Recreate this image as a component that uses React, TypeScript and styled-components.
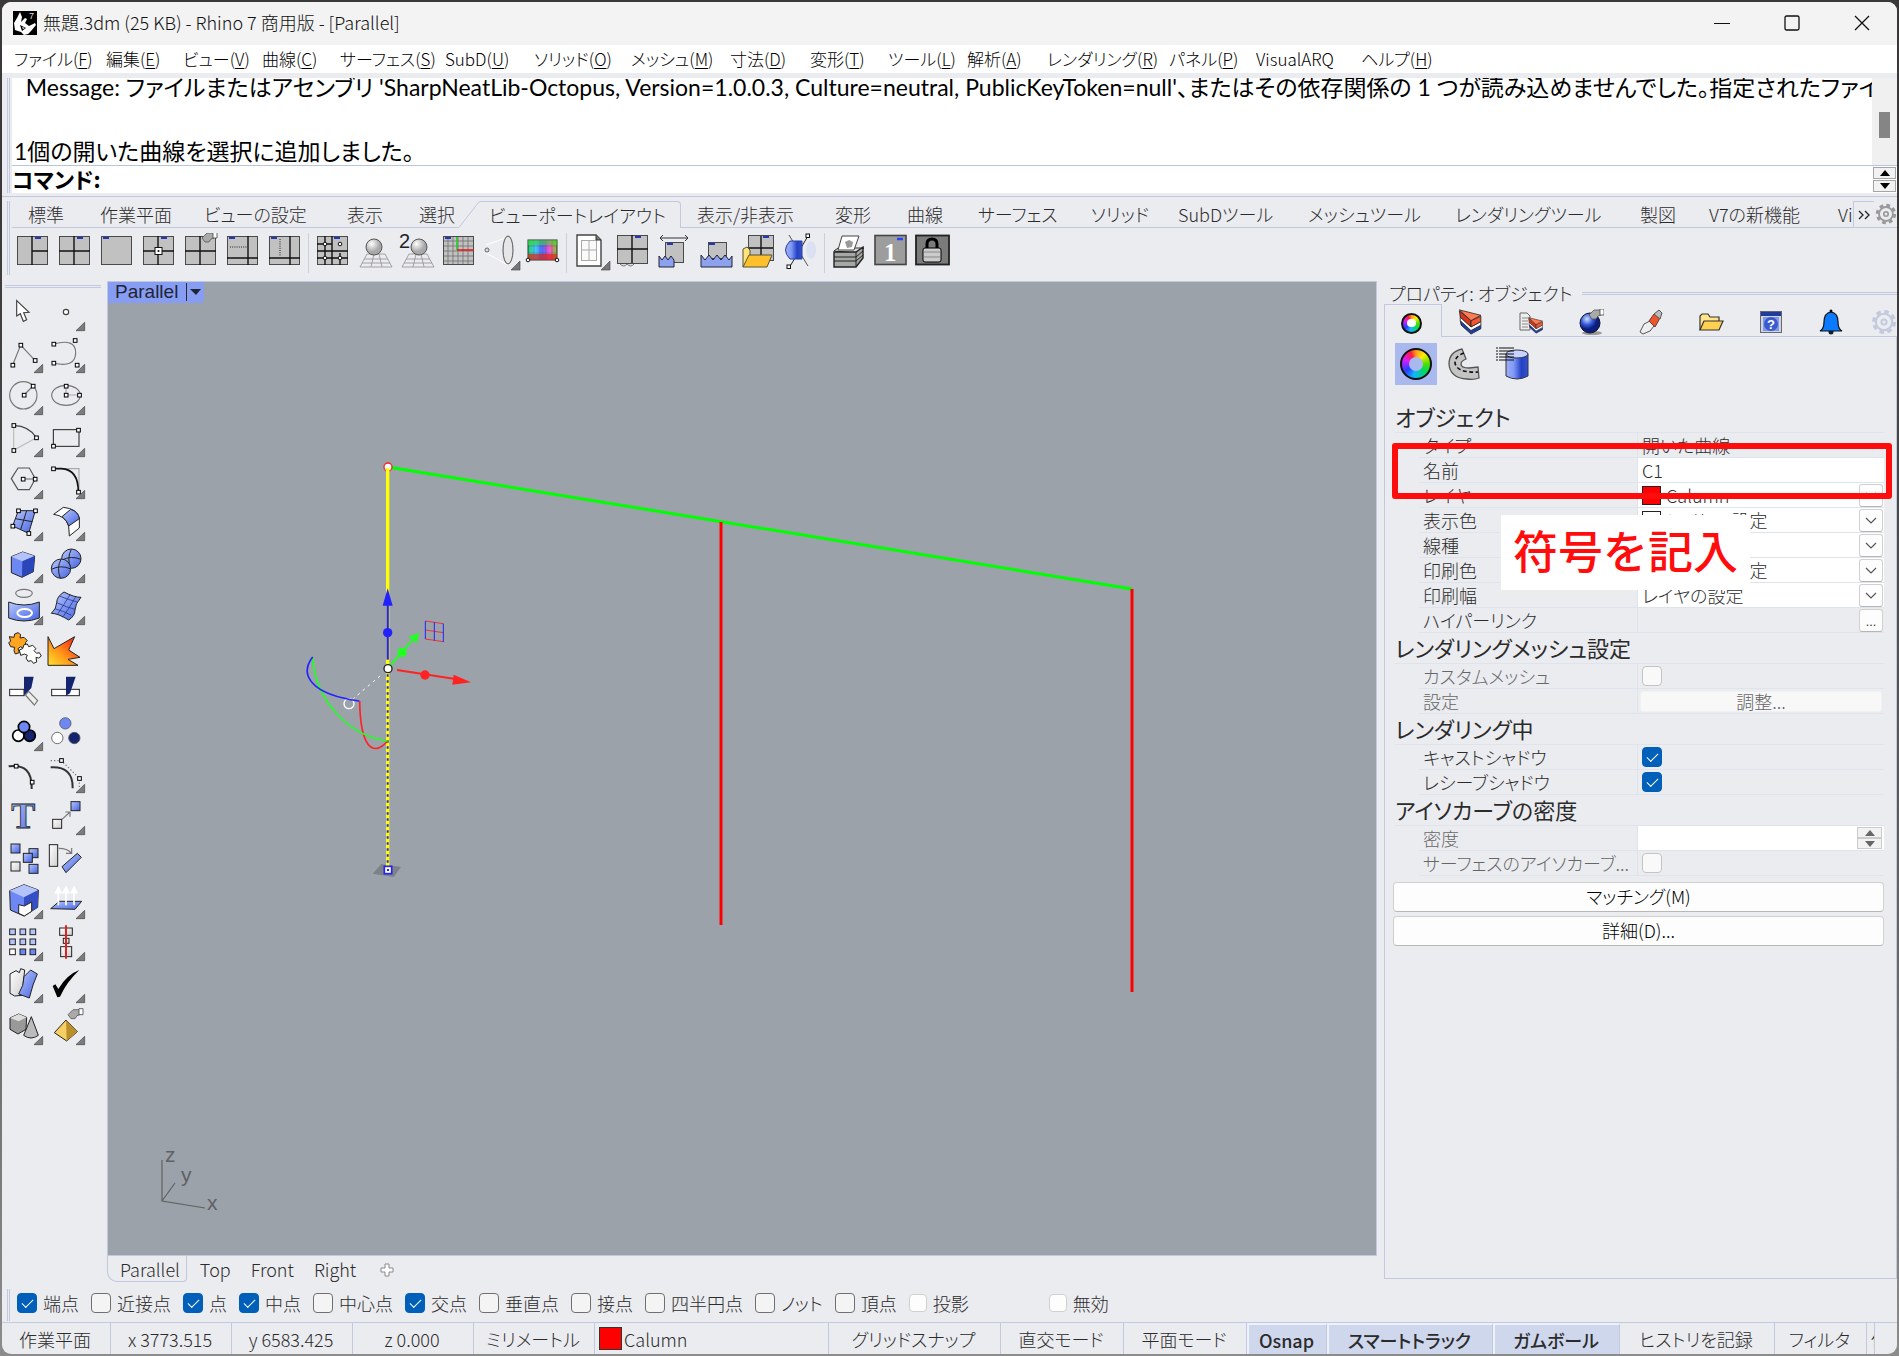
import React, { useState } from "react";
import styled, { createGlobalStyle, css } from "styled-components";

const c = {
  face: "#ebecf0",
  line: "#c2c9df",
  softLine: "#dfe3ec",
  text: "#2b2b2b",
  red: "#ff0d0d",
  accent: "#005fb8",
  blue: "#6d88f2",
  pale: "#b4c4fb",
  navy: "#14246e",
};
const ui = `"Noto Sans CJK JP", "Noto Sans", sans-serif`;

const Global = createGlobalStyle`
  * { box-sizing: border-box; }
  body { margin: 0; background: linear-gradient(#3a3838 0 15%, #5a5a5a 60%, #8c8c8c); font: 300 18px/20px ${ui}; color: ${c.text}; font-feature-settings: "palt"; }
  button, input, select { font: inherit; font-feature-settings: inherit; color: inherit; margin: 0; }
`;

const Page = styled.div`height: 100vh; min-height: 1000px; padding: 2px;`;
const Window = styled.main`
  height: 100%; display: flex; flex-direction: column; background: ${c.face};
  border-radius: 9px; overflow: hidden;
`;

/* ---------- title and menu ---------- */
const TitleBar = styled.header`
  height: 43px; flex: none; background: #f3f3f3; display: flex; align-items: center; padding: 0 0 2px 11px; color: #111;
`;
const Title = styled.h1`font: inherit; line-height: 22px; margin: 0 0 2px 6px; flex: 1; white-space: nowrap;`;
const CaptionButton = styled.button`
  width: 70px; height: 41px; border: 0; background: none; display: grid; place-items: center; padding: 0;
`;
const MenuBar = styled.nav`
  height: 28px; flex: none; background: #fff; display: flex; align-items: center; padding-left: 12px; color: #000;
`;
const MenuButton = styled.button<{ $w: number }>`
  width: ${p => p.$w}px; border: 0; background: none; padding: 0; text-align: left; white-space: nowrap; font-size: 17px;
  u { text-underline-offset: 2px; text-decoration-thickness: 1px; }
`;

/* ---------- command area ---------- */
const Command = styled.section`display: flex; padding: 5px 0 3px 5px; flex: none; height: 123px;`;
const GripV = styled.div`width: 3px; border: solid ${c.line}; border-width: 0 1px; margin-right: 2px; flex: none;`;
const CommandBox = styled.div`flex: 1; min-width: 0; display: flex; flex-direction: column; background: #fff; color: #000;`;
const HistoryRow = styled.div`flex: 1; display: flex; min-height: 0; border-bottom: 1px solid #b9c5d9;`;
const History = styled.div`
  flex: 1; min-width: 0; overflow: hidden; display: flex; flex-direction: column; justify-content: flex-end;
  font-family: Lato, ${ui}; font-weight: 400; font-size: 23px; line-height: 36px; white-space: pre; padding-left: 2px;
  p { margin: 0; height: 32px; flex: none; }
`;
const ScrollTrack = styled.div`width: 25px; background: #f0f0f0; padding: 34px 7px 0;`;
const ScrollThumb = styled.div`width: 11px; height: 26px; background: #858585;`;
const Prompt = styled.div`
  height: 27px; display: flex; align-items: flex-start; font-size: 22px; line-height: 24px; font-weight: 700;
  label { white-space: nowrap; }
  input { flex: 1; border: 0; outline: 0; background: none; padding: 0 6px; height: 26px; font-weight: 400; }
`;
const Stepper = styled.div`
  width: 25px; padding: 1px; display: flex; flex-direction: column; gap: 1px; height: 27px; background: #fff;
  button { flex: 1; min-height: 0; padding: 0; border: 1px solid #a5a5a5; background: #f2f2f2; display: grid; place-items: center; }
`;

/* ---------- toolbar tabs ---------- */
const ToolGroup = styled.section`
  flex: none; height: 81px; border-top: 1px solid ${c.line}; padding: 4px 0 2px 5px; display: flex;
`;
const ToolBody = styled.div`flex: 1; min-width: 0;`;
const Tabs = styled.div`display: flex; height: 27px;`;
const Tab = styled.button<{ $w: number; $on?: boolean; $fill?: boolean }>`
  width: ${p => p.$w}px; flex: ${p => (p.$fill ? "1 1 0" : "none")}; height: 27px; padding: 0 0 0 16px; background: none; border: 0;
  border-bottom: 1px solid ${c.line}; text-align: left; white-space: nowrap; overflow: hidden;
  ${p => p.$on && css`padding-left: 8px; border: 1px solid ${c.line}; border-width: 1px 1px 0 0; border-radius: 0 4px 0 0;`}
`;
const Slant = styled.svg`width: 22px; height: 27px; flex: none;`;
const More = styled.button`
  width: 21px; height: 27px; padding: 0; background: none; border: 1px solid ${c.line}; border-right: 0; display: grid; place-items: center; flex: none;
`;
const Gear = styled.button`
  width: 23px; height: 27px; padding: 0; background: none; border: 0; border-bottom: 1px solid ${c.line}; flex: none; display: grid; place-items: center;
`;
const IconRow = styled.div`display: flex; padding: 5px 0 0 2px;`;
const ToolButton = styled.button`
  width: 42px; height: 40px; padding: 0; border: 0; background: none; flex: none;
  svg { display: block; width: 40px; height: 40px; }
`;
const Separator = styled.div`width: 6px; height: 40px; border-left: 1px solid #cdd0da;`;

/* ---------- workspace ---------- */
const Workspace = styled.div`flex: 1; min-height: 0; display: flex; padding-top: 4px;`;
const SideBar = styled.aside`width: 105px; flex: none; padding: 4px 6px 0 3px;`;
const GripH = styled.div`height: 3px; border: solid ${c.line}; border-width: 1px 0;`;
const SideGrid = styled.div`
  display: grid; grid-template-columns: 42px 42px; grid-auto-rows: 42px; padding: 6px 0 0 1px;
  button { border: 0; background: none; padding: 0; width: 38px; height: 38px; }
  svg { display: block; width: 38px; height: 38px; overflow: visible; }
`;
const ViewColumn = styled.section`flex: 1; min-width: 0; display: flex; flex-direction: column; padding-bottom: 5px;`;
const Viewport = styled.div`
  flex: 1; min-height: 0; background: #9ba2aa; border: 1px solid ${c.line}; position: relative; overflow: hidden;
`;
const Scene = styled.svg`position: absolute; inset: 0; width: 100%; height: 100%;`;
const ViewLabel = styled.button`
  position: relative; display: flex; align-items: center; height: 21px; padding: 0 0 2px 7px; border: 0;
  background: #879df2; color: #1f2536; font-family: "Liberation Sans", sans-serif; font-weight: 400; font-size: 19px; gap: 8px; border-radius: 0 0 4px 0;
  svg { border-left: 1px solid #2b2b2b; margin-top: 1px; }
`;
const ViewTabs = styled.div`display: flex; height: 26px; align-items: flex-start;`;
const ViewTab = styled.button<{ $on?: boolean }>`
  height: 26px; padding: 0 10px; border: 0; background: none;
  &:last-child { padding-left: 14px; }
  ${p => p.$on && css`
    padding: 0 6px 0 12px; border: 1px solid ${c.line}; border-top: 0; border-radius: 0 0 4px 10px; margin-right: 3px;
  `}
`;

/* ---------- properties panel ---------- */
const Panel = styled.aside`width: 513px; flex: none; margin: 1px 0 0 7px; display: flex; flex-direction: column; padding-bottom: 8px; position: relative;`;
const PanelTitle = styled.div`
  display: flex; align-items: center; height: 22px; padding-left: 5px; gap: 10px; white-space: nowrap;
  div { flex: 1; }
`;
const PanelTabs = styled.div`display: flex; height: 33px;`;
const PanelTab = styled.button<{ $on?: boolean; $last?: boolean }>`
  flex: ${p => (p.$last ? "1 1 0" : "0 0 60px")}; min-width: 0; padding: 4px 2px 0 0; background: none; border: 0; border-bottom: 1px solid ${c.line};
  display: grid; place-items: center;
  svg { width: 26px; height: 26px; }
  ${p => p.$on && css`flex-basis: 58px; border: 1px solid ${c.line}; border-bottom: 0; padding-right: 3px;`}
  ${p => p.$last && css`justify-content: end; padding-right: 0;`}
`;
const PanelBody = styled.div`flex: 1; border: 1px solid ${c.line}; border-top: 0; padding: 6px 12px 0 8px;`;
const Modes = styled.div`
  display: flex; gap: 6px; height: 42px; margin-bottom: 17px; padding-left: 2px;
  button { width: 42px; height: 42px; border: 0; background: none; padding: 0; display: grid; place-items: center; }
  button[aria-pressed="true"] { background: #a9b9ee; }
`;
const Wheel = styled.span<{ $size: number }>`
  width: ${p => p.$size}px; height: ${p => p.$size}px; border-radius: 50%; border: 2px solid #111; display: grid; place-items: center;
  background: conic-gradient(#ff9a1f, #ffef00 40deg, #4be000 90deg, #00d860 130deg, #14b6ff 190deg, #2440ff 235deg, #d81cff 290deg, #ff1b3a 335deg, #ff9a1f);
  &::after { content: ""; width: 52%; height: 52%; border-radius: 50%; background: ${p => (p.$size > 25 ? "#a9b9ee" : "#fff")}; }
`;
const Heading = styled.h2`
  margin: 0 0 0 2px; height: 31px; font: inherit; font-weight: 400; font-size: 22px; line-height: 29px; border-bottom: 1px solid ${c.softLine}; white-space: nowrap;
`;
const Row = styled.div<{ $dim?: boolean }>`
  height: 25px; margin-left: 26px; display: flex; border-bottom: 1px solid ${c.softLine}; color: ${p => (p.$dim ? "#666" : c.text)};
`;
const RowLabel = styled.label`
  width: 219px; flex: none; padding-left: 4px; line-height: 24px; border-right: 1px solid ${c.softLine}; white-space: nowrap;
`;
const Value = styled.div<{ $white?: boolean }>`
  flex: 1; min-width: 0; display: flex; align-items: center; background: ${p => (p.$white ? "#fff" : "none")}; padding-left: 4px;
  > input[type="text"], > select { flex: 1; min-width: 0; border: 0; background: none; padding: 0; appearance: none; height: 24px; outline: 0; }
`;
const Swatch = styled.span<{ $color: string }>`
  width: 19px; height: 19px; background: ${p => p.$color}; border: 1px solid #222; margin-right: 5px; flex: none;
`;
const SmallBox = styled.span`
  width: 24px; height: 23px; border: 1px solid #d0d0d0; border-bottom-color: #b5b5b5; border-radius: 3px; background: #fdfdfd; display: grid; place-items: center; margin-right: 1px;
`;
const DotsButton = styled(SmallBox).attrs({ as: "button" })`padding: 0; font-size: 14px; margin-left: auto;`;
const WideButton = styled.button`
  display: block; width: 100%; height: 30px; margin: 6px 0 -2px; border: 1px solid #d0d0d0; border-bottom-color: #b8b8b8;
  border-radius: 4px; background: #fdfdfd; color: #000; padding: 0 0 2px;
`;
const DisabledButton = styled.button`
  flex: 1; height: 21px; margin: 0 2px 0 -2px; border: 1px solid #f1f1f1; border-radius: 3px; background: #f8f8f8; padding: 0; line-height: 18px;
  &:disabled { color: #666; }
`;
const TinyStepper = styled(Stepper)`height: 22px; padding: 0; gap: 0; margin-right: 2px; button { border-color: #ccc; }`;
const Check = styled.input.attrs({ type: "checkbox" })<{ $soft?: boolean }>`
  appearance: none; width: ${p => (p.$soft ? 18 : 20)}px; height: ${p => (p.$soft ? 18 : 20)}px; border-radius: 4px; flex: none;
  border: 1px solid ${p => (p.$soft ? "#d0d0d0" : "#707070")}; background: ${p => (p.$soft ? "#fdfdfd" : "#f4f4f4")};
  display: grid; place-items: center;
  &:disabled { border-color: #c4c4c4; background: #f9f9f9; }
  &:checked { background: ${c.accent}; border-color: ${c.accent}; }
  &:checked::after { content: ""; width: 10px; height: 5px; border: solid #fff; border-width: 0 0 1px 1px; transform: rotate(-45deg); margin-top: -3px; }
`;
const Highlight = styled.div`
  position: absolute; left: 8px; right: 5px; top: 161px; height: 56px; border: 6px solid ${c.red}; border-radius: 3px; pointer-events: none;
`;
const Callout = styled.div`
  position: absolute; left: 117px; top: 233px; width: 249px; height: 75px; background: #fff; color: ${c.red};
  font-size: 45px; font-weight: 500; line-height: 70px; text-align: center; white-space: nowrap; font-feature-settings: normal;
`;

/* ---------- bottom bars ---------- */
const SnapBar = styled.div`height: 35px; flex: none; padding: 2px 0 0 5px; display: flex;`;
const SnapList = styled.div`
  display: flex; align-items: center; gap: 12px; padding: 0 0 5px 7px;
  label { display: flex; align-items: center; gap: 6px; white-space: nowrap; }
  label:last-child { margin-left: 68px; }
`;
const SnapGrip = styled(GripV)`height: 32px; margin: 0;`;
const StatusBar = styled.footer`height: 32px; flex: none; display: flex; border-top: 1px solid ${c.line};`;
const Status = styled.button<{ $w: number; $on?: boolean; $left?: boolean }>`
  width: ${p => p.$w}px; flex: none; border: 0; border-right: 1px solid ${c.line}; background: none; padding: 0 2px 0 0; white-space: nowrap; overflow: hidden;
  display: flex; align-items: center; justify-content: ${p => (p.$left ? "flex-start" : "center")};
  ${p => p.$left && css`padding-left: 4px;`}
  ${p => p.$on && css`background: #cfd7ed; font-weight: 500; border-top: 2px solid #eef1fa; border-left: 2px solid #eef1fa;`}
`;
const StatusSwatch = styled.span`width: 23px; height: 23px; background: #f00; border: 1px solid #333; margin-right: 2px;`;

/* ---------- drawings ---------- */
const Tri = ({ up, tone = "#000" }: { up?: boolean; tone?: string }) => (
  <svg width="10" height="6" viewBox="0 0 10 6" aria-hidden><path d={up ? "M0 6 5 0l5 6z" : "M0 0h10L5 6z"} fill={tone} /></svg>
);
const Chevron = () => (
  <svg width="12" height="7" viewBox="0 0 12 7" aria-hidden><path d="M1 1l5 5 5-5" fill="none" stroke="#555" strokeWidth="1.2" /></svg>
);
const Cog = ({ tone }: { tone: string }) => (
  <svg width="22" height="22" viewBox="0 0 24 24" fill="none" stroke={tone} aria-hidden>
    <circle cx="12" cy="12" r="9.6" strokeWidth="3" strokeDasharray="4.2 3.34" />
    <circle cx="12" cy="12" r="7.6" strokeWidth="2" /><circle cx="12" cy="12" r="2.4" strokeWidth="1.8" />
  </svg>
);
const Corner = () => <path d="M38 28v9h-9z" fill="#777" stroke="#444" strokeWidth=".6" />;
const Pane = ({ x = 3.5, y = 3.5, w = 30, h = 28, d = "" }) => (
  <g>
    <rect x={x} y={y} width={w} height={h} fill="#c1c1c1" stroke="#4a4a4a" />
    <path d={d} fill="none" stroke="#111" strokeWidth="1.4" />
  </g>
);
const Tick = ({ x, y = 5 }: { x: number; y?: number }) => <path d={`M${x} ${y}h6`} stroke="#2338b8" strokeWidth="1.8" />;
const Node = ({ x, y }: { x: number; y: number }) => <circle cx={x} cy={y} r="1.8" fill="#fff" stroke="#111" />;
const Ball = ({ x, y }: { x: number; y: number }) => (
  <g>
    <path d="M11 21h18l7 13H4zM8 26h24M6 30h28M18 21l-3 13M23 21l3 13" fill="none" stroke="#9a9a9a" strokeWidth=".9" />
    <circle cx={x} cy={y} r="8" fill="url(#ball)" stroke="#555" />
  </g>
);
const Hand = ({ x, y, s = 1 }: { x: number; y: number; s?: number }) => (
  <g transform={`translate(${x} ${y}) scale(${s})`}>
    <path d="M0 6 5 1h7v5l-3 1-2 3H3z" fill="#aaa" stroke="#555" strokeWidth=".8" /><path d="M11 0h4v6h-4z" fill="#fff" stroke="#444" strokeWidth=".8" />
  </g>
);

const topIcons: Record<string, React.ReactNode> = {
  three: <><Pane d="M18 3v29M18 18h16" /><Tick x={21} /></>,
  four: <><Pane d="M18 3v29M3 18h31" /><Tick x={21} /></>,
  one: <><Pane /><Tick x={5} /></>,
  center: <><Pane d="M18 3v29M3 18h31" /><Tick x={21} /><rect x="15" y="14.500" width="7" height="7" fill="#fff" stroke="#111" /><circle cx="18.500" cy="18" r="1" /></>,
  fourProps: <><Pane d="M18 3v29M3 18h31" /><Tick x={21} /><Hand x={20} y={-1} /></>,
  splitH: <><Pane d="M3 25h31M24 3v29" /><path d="M6 14h17" stroke="#222" strokeDasharray="1 1.200" /><Tick x={5} /></>,
  splitV: <><Pane d="M3 25h31M24 3v29" /><path d="M14 6v17" stroke="#222" strokeDasharray="1 1.200" /><Tick x={5} /></>,
  nodes: <><Pane d="M11 3v29M18 3v29M26 20v12M3 11h15M3 18h31M3 25h31" /><Tick x={20} /><Node x={11} y={11} /><Node x={26} y={11} /><Node x={11} y={25} /><Node x={26} y={25} /></>,
  ball: <Ball x={18} y={14} />,
  ball2: <><Ball x={21} y={14} /><text x="1" y="15" fontFamily="Liberation Sans" fontSize="20" fill="#222">2</text></>,
  grid: <><Pane /><path d="M8 4v27M13 4v27M18 4v27M23 4v27M28 4v27M4 8h29M4 13h29M4 18h29M4 23h29M4 28h29" stroke="#777" strokeWidth=".9" /><Tick x={5} /><path d="M17 4v13" stroke="#2c2" strokeWidth="1.600" /><path d="M17 17h17" stroke="#e11" strokeWidth="1.600" /></>,
  lens: <><path d="M4 12 26 4M4 20l22 12" stroke="#fff" /><circle cx="5" cy="17" r="2" fill="#ddd" stroke="#666" /><ellipse cx="26" cy="17" rx="5" ry="14" fill="#e6e6e6" stroke="#555" /><Corner /></>,
  spectrum: <><rect x="4" y="7" width="29" height="20" fill="url(#hue)" stroke="#333" /><path d="M4 13h29M4 20h29M10 7v20M16 7v20M22 7v20M28 7v20" stroke="#444" strokeOpacity=".3" /><rect x="4" y="7" width="29" height="5" fill="#3d2" fillOpacity=".55" /><rect x="4" y="21" width="29" height="6" fill="#d21" fillOpacity=".7" /><Node x={4} y={27} /><Node x={33} y={27} /></>,
  page: <><path d="M5 2h19l5 5v26H5z" fill="#fff" stroke="#444" strokeWidth="1.400" /><rect x="9.500" y="7.500" width="15" height="20" fill="#fafafa" stroke="#aaa" /><path d="M17 8v19M10 17h14" stroke="#aaa" /><path d="M24 2v5h5" fill="#777" stroke="#333" /><Corner /></>,
  fourFoot: <><Pane y={2.500} d="M18 2v28M3 16h31" /><Tick x={21} y={4} /><path d="M6 31q4 4 7 0q4 4 7 0" fill="#ddd" stroke="#777" /></>,
  measure: <><path d="M4 5h28M7 2 4 5l3 3M29 2l3 3-3 3" fill="none" stroke="#333" /><Pane x={9.500} y={9.500} w={18} h={20} /><Tick x={11} y={11} /><path d="M3 23l3 4 3-4 3 4 3-4 3 4v7H3z" fill="#8ca2ee" stroke="#223" /></>,
  clip: <><Pane x={10.500} y={9.500} w={18} h={16} /><Tick x={11} y={11} /><path d="M3 22l4 5 4-5 4 5 4-5 4 5 4-5 4 5 3-4v11H3z" fill="#8ca2ee" stroke="#223" /></>,
  open: <><Pane x={8.500} y={2.500} w={25} h={25} d="M21 3v24M9 15h24" /><Tick x={23} y={4} /><path d="M3 34V16l4-2 3 3v8z" fill="#ffe27a" stroke="#553" /><path d="M3 34 9 22h23l-5 12z" fill="#ffc12b" stroke="#553" /></>,
  cylinder: <><path d="M7 2 26 33" stroke="#555" /><path d="M26 3 7 35" stroke="#222" /><ellipse cx="29" cy="17" rx="5" ry="9" fill="#dbe0f3" /><path d="M8 8h12v18H8q-9-9 0-18z" fill="url(#cyl)" stroke="#2b3f9e" /><rect x="24" y="1" width="3.500" height="3.500" fill="#fff" stroke="#111" /><rect x="5" y="32" width="3.500" height="3.500" fill="#fff" stroke="#111" /></>,
  print: <><path d="M4 18l4-3h26l-7 5z" fill="#ddd" stroke="#333" /><path d="M8 17 12 3h17l-5 14z" fill="#fff" stroke="#444" /><path d="m15 9 4-2 4 2-1 5-5 1z" fill="#999" /><path d="M4 19h22l7-5v11l-7 9H4z" fill="#a5a8a5" stroke="#222" strokeWidth="1.400" /><path d="M4 24h22M4 28h22M26 19v14M26 24l7-6M26 28l7-6" stroke="#222" /></>,
  number: <><rect x="3" y="2.500" width="31" height="29" fill="#9d9d9d" stroke="#444" strokeWidth="1.600" /><text x="12" y="28" fontFamily="Liberation Serif" fontWeight="700" fontSize="25" fill="#fff">1</text><path d="M25 6h6" stroke="#24f" strokeWidth="2.400" /></>,
  lock: <><rect x="2" y="2.500" width="33" height="29" fill="#7b7b7b" stroke="#222" strokeWidth="1.800" /><path d="M13 17v-6q0-5 5-5t5 5v6" fill="none" stroke="#000" strokeWidth="3" /><rect x="9" y="15" width="18" height="14" rx="2" fill="#ccc" stroke="#000" /><path d="M10 19h16M10 24h16" stroke="#888" /></>,
};
const topRow = [
  ["three", "four", "one", "center", "fourProps", "splitH", "splitV"],
  ["nodes", "ball", "ball2", "grid", "lens", "spectrum"],
  ["page", "fourFoot", "measure", "clip", "open", "cylinder"],
  ["print", "number", "lock"],
];

const Sq = ({ at }: { at: [number, number][] }) => (
  <>{at.map(([x, y]) => <rect key={`${x},${y}`} x={x - 5} y={y - 5} width="11" height="11" fill="#fff" stroke="#000" strokeWidth="3" />)}</>
);
const g = { fill: "none", stroke: "#777", strokeWidth: 3.5 };
const k = { stroke: "#222", strokeWidth: 3 };
const B = "url(#blue)";
const W = "url(#white)";
type Side = [string, boolean, React.ReactNode];
const sideIcons: Side[] = [
  ["選択", false, <path d="M32 20v46l11-7 9 23 10-5-9-21 16-1z" fill="#fff" stroke="#444" strokeWidth="3.5" />],
  ["点", true, <circle cx="54" cy="54" r="8" fill="#fff" stroke="#444" strokeWidth="3.500" />],
  ["ポリライン", true, <><path d="M20 87 44 27 87 73" {...g} /><Sq at={[[44, 27], [20, 87], [87, 73]]} /></>],
  ["曲線", true, <><path d="M17 24C60 12 83 20 83 50S60 92 17 81" {...g} /><Sq at={[[17, 24], [81, 13], [17, 81], [87, 87]]} /></>],
  ["円", true, <><circle cx="52" cy="52" r="41" {...g} /><path d="M54 51 81 24" {...g} /><Sq at={[[54, 51], [81, 24]]} /></>],
  ["楕円", true, <><ellipse cx="54" cy="52" rx="43" ry="30" {...g} /><path d="M54 24v27h40" {...g} stroke="#aaa" /><Sq at={[[54, 51], [94, 51], [54, 24]]} /></>],
  ["円弧", true, <><path d="M23 91V16M23 91 91 53" {...g} stroke="#bbb" /><path d="M23 16Q70 18 91 53" {...g} stroke="#444" /><Sq at={[[23, 16], [91, 53], [23, 91]]} /></>],
  ["長方形", true, <><rect x="16" y="29" width="77" height="50" fill="none" {...k} /><Sq at={[[91, 30], [16, 78]]} /></>],
  ["多角形", true, <><path d="M16 50 36 18h34l18 32-18 33H36z" {...g} stroke="#555" /><path d="M51 51h36" {...g} /><Sq at={[[51, 51], [87, 51]]} /></>],
  ["フィレット", true, <><path d="M16 20h77v70" {...g} stroke="#aaa" /><path d="M16 20h24q51 2 51 70" fill="none" stroke="#111" strokeWidth="5" /><Sq at={[[16, 20], [91, 90]]} /></>],
  ["サーフェス", true, <><path d="M37 20h51L68 88 20 66z" fill={B} {...k} /><path d="M62 20 44 77M28 44l51 9" {...k} fill="none" /><Sq at={[[37, 20], [88, 20], [68, 88], [20, 66]]} /></>],
  ["シートロフト", true, <><path d="M17 31 46 10Q88 14 94 42v30L64 96l-2-30Q52 35 17 31z" fill="#fff" {...k} /><path d="M42 38 68 16Q92 24 94 44L62 66Q57 48 42 38z" fill={B} {...k} /></>],
  ["直方体", true, <><path d="M16 32 50 18l36 12-4 47-34 17-32-14z" fill={c.blue} {...k} /><path d="M16 32 50 18l36 12-37 16z" fill={c.pale} /><path d="M49 46 86 30l-4 47-34 17z" fill="#2b46b8" /></>],
  ["球", true, <><circle cx="70" cy="38" r="29" fill={B} {...k} /><path d="M42 42q28-14 56-2M70 10q-14 26-2 56" fill="none" {...k} /><circle cx="39" cy="68" r="29" fill={B} {...k} /><path d="M10 70q28-14 56-2M39 40q-14 26-2 56" fill="none" {...k} /></>],
  ["投影", true, <><ellipse cx="54" cy="16" rx="25" ry="12" {...g} /><path d="M8 42q46 18 92 0v48q-46 18-92 0z" fill={B} {...k} /><ellipse cx="56" cy="75" rx="22" ry="12" fill="none" stroke="#fff" strokeWidth="6" /></>],
  ["面編集", true, <><path d="M10 76Q26 62 26 44T48 12q30 16 51 16-18 20-18 38T62 96Q30 76 10 76z" fill={B} {...k} /><path d="M26 44q30 14 55 20M20 62q30 8 50 20M34 24q30 12 54 18M66 20Q48 50 28 80M82 28Q64 60 44 88" fill="none" stroke="#2a3a8c" strokeWidth="2.500" /></>],
  ["ブール", false, <><path d="M10 20l14 2 2-10 10-4 8 6-2 10 12-2 10 10-6 6 4 10-10 8-8-6-8 6 4 12-12 4-4-10 2-10-12-2-6-12 6-4z" fill="#ffa51f" {...k} strokeLinejoin="round" /><path d="M40 60l10-4 4-12 10-2 4 8 12-4 10 10-6 6 8 8 8-2 6 10-8 6-8-2 2 14-10 4-6-8-10 2-6-10 4-8-8-4-12 4z" fill="#fff" {...k} strokeLinejoin="round" /></>],
  ["分解", false, <path d="M0 20 18 56 80 20 62 60l34 22-36 6 30 18H0z" fill="url(#fire)" {...k} />],
  ["トリム", false, <><rect x="11" y="52" width="43" height="19" fill="#fff" {...k} /><path d="M54 14h29L76 48 54 71z" fill={c.navy} /><path d="M58 69 68 58 95 86 85 99z" fill="#eee" stroke="#777" strokeWidth="3.500" /></>],
  ["分割", false, <><rect x="11" y="52" width="83" height="19" fill="#fff" {...k} /><path d="M54 14h29L66 64l-12 7z" fill={c.navy} /></>],
  ["グループ", true, <g stroke="#000" strokeWidth="5"><circle cx="71" cy="65" r="17" fill={c.navy} /><circle cx="37" cy="65" r="17" fill="#fff" /><circle cx="54" cy="39" r="17" fill={c.blue} /></g>],
  ["グループ解除", false, <g stroke="#555" strokeWidth="2.500"><circle cx="79" cy="72" r="17" fill={c.navy} /><circle cx="28" cy="72" r="17" fill="#fff" /><circle cx="52" cy="28" r="17" fill={c.blue} /></g>],
  ["点編集", false, <><path d="M8 31Q80 20 77 99" fill="none" stroke="#333" strokeWidth="6" /><Sq at={[[30, 30], [78, 78]]} /></>],
  ["制御点", true, <><path d="M8 34Q76 30 74 97" fill="none" stroke="#333" strokeWidth="6" /><path d="M8 14h32l54 53v30" {...g} strokeDasharray="4 6" /><Sq at={[[40, 13], [94, 67]]} /></>],
  ["テキスト", false, <text x="16" y="90" fontFamily="Liberation Serif" fontWeight="700" fontSize="108" fill={B} stroke="#222" strokeWidth="2.500">T</text>],
  ["移動", true, <><rect x="14" y="64" width="27" height="27" fill={W} {...k} /><rect x="69" y="11" width="27" height="27" fill={B} {...k} /><path d="M42 64 66 42M52 42h14v14" {...g} /></>],
  ["コピー", false, <g {...k}><rect x="15" y="12" width="27" height="27" fill={B} /><rect x="15" y="66" width="27" height="27" fill={W} /><rect x="69" y="26" width="27" height="27" fill={B} /><rect x="52" y="40" width="27" height="27" fill={B} /><rect x="69" y="73" width="27" height="27" fill={B} /></g>],
  ["回転", false, <><rect x="4" y="14" width="25" height="65" fill={W} {...k} /><path d="M32 25q26 0 38 14M54 40h17V24" {...g} /><path d="M42 80 88 40l12 12-46 46z" fill={B} {...k} /></>],
  ["ソリッド編集", true, <><path d="M11 26 54 8l43 16-2 52-41 26-41-18z" fill={c.blue} {...k} /><path d="M11 26 54 8l43 16-43 22z" fill={c.pale} /><path d="M54 46 97 24l-2 52-41 26z" fill="#3450c4" /><path d="M38 68l17 4 22-12v28l-22 14-17-8z" fill="#fff" {...k} /></>],
  ["押し出し", true, <><path d="M8 80 34 58h67L81 82z" fill={B} {...k} /><path d="M31 70V20M54 70V20M78 70V20M23 32l8-16 8 16zM46 32l8-16 8 16zM70 32l8-16 8 16z" stroke="#fff" strokeWidth="5" fill="#fff" /></>],
  ["配列", true, <g {...k}>{[11, 42, 72].flatMap((x, i) => [15, 45, 75].map((y, j) => <rect key={`${i}${j}`} x={x} y={y} width="17" height="17" fill={j === 2 && i === 0 ? "#fff" : j === 2 ? c.blue : c.pale} />))}</g>],
  ["整列", true, <><g {...k} fill={W}><rect x="35" y="12" width="38" height="22" /><rect x="46" y="43" width="17" height="15" /><rect x="38" y="68" width="33" height="30" /></g><path d="M54 4v100" stroke="#d22" strokeWidth="6" /></>],
  ["変形", true, <><path d="M12 24 30 14l10 6 4-12 12 4-8 76-22 2-14-8z" fill={W} {...k} /><path d="M54 32 74 12l20 12q-14 30-24 72L38 84q16-26 16-52z" fill={B} {...k} /></>],
  ["チェック", true, <path d="M14 60l8-5 9 14Q56 26 94 12 56 48 36 92l-8 2z" fill="#000" />],
  ["メッシュ", true, <><path d="M12 30 38 18l24 10-2 36-24 14-24-14z" fill="#999" {...k} /><path d="M12 30 38 18l24 10-24 12z" fill="#ddd" /><path d="M76 26 53 82q22 16 44 0z" fill="#bbb" {...k} /></>],
  ["レンダリング", true, <><path d="M54 36 19 74l37 25 32-28z" fill="#f6cf63" {...k} /><path d="M54 36 56 99 88 71z" fill="#b98f2b" /><Hand x={60} y={2} s={3} /></>],
];

const Slice = () => (
  <g stroke="#222" strokeWidth=".9" strokeLinejoin="round">
    <path d="M2 13 14 24l11-6v4l-11 6L3 18z" fill="#1d3fae" />
    <path d="M2 9l12 11 11-6v4l-11 6L2 13z" fill="#fff" />
    <path d="M1 2l13 11v7L2 9z" fill="#d8351c" />
    <path d="M14 13l11-5v6l-11 6z" fill="#f4542f" />
    <path d="M1 1l24 6-11 6z" fill="#ff7d52" />
  </g>
);
const panelIcons: [string, React.ReactNode][] = [
  ["レイヤ", <svg viewBox="0 0 28 29"><Slice /></svg>],
  ["名前の付いたビュー", <svg viewBox="0 0 26 26"><path d="M2 4h7l3 3v14H2z" fill="#eee" stroke="#666" /><path d="M4 9h6M4 12h6M4 15h6M4 18h6" stroke="#888" /><g transform="translate(10 8) scale(.58)"><Slice /></g></svg>],
  ["表示", <svg viewBox="0 0 26 26"><ellipse cx="14" cy="24" rx="10" ry="2" fill="#999" /><circle cx="12" cy="14" r="10" fill="url(#globe)" stroke="#113" /><Hand x={11} y={0} /></svg>],
  ["マテリアル", <svg viewBox="0 0 26 26"><path d="M2 23l4-8 6-3 4 5-4 5-7 3z" fill="#eee" stroke="#555" /><path d="M11 12l5-7 6 4-5 9z" fill="#e8572c" stroke="#733" /><path d="M16 5l5-4 3 3-2 6z" fill="#bbb" stroke="#555" /></svg>],
  ["ライブラリ", <svg viewBox="0 0 26 26"><path d="M2 21V7l2-2h6l2 3h9v4" fill="#ffe48a" stroke="#333" strokeWidth="1.200" /><path d="M2 21 6 12h19l-4 9z" fill="#ffd052" stroke="#333" strokeWidth="1.200" /></svg>],
  ["ヘルプ", <svg viewBox="0 0 26 26"><rect x="2.500" y="2.500" width="21" height="21" fill="#d5d5d5" stroke="#667" /><rect x="3" y="3" width="20" height="4" fill="#223a9a" /><rect x="5" y="8" width="16" height="14" fill="#7c9af0" /><circle cx="13" cy="15" r="7" fill="#3a5bd0" /><text x="9" y="20" fontFamily="Liberation Sans" fontWeight="700" fontSize="13" fill="#fff">?</text></svg>],
  ["通知", <svg viewBox="0 0 26 26"><circle cx="13" cy="23" r="2.500" fill="#123" /><path d="M2 22q4-2 4-9 0-9 7-10 7 1 7 10 0 7 4 9z" fill="#0a7bff" stroke="#111" strokeWidth="1.200" /><circle cx="13" cy="2" r="1.500" /></svg>],
];

const HiddenDefs = styled.svg`position: absolute;`;
const Defs = () => (
  <HiddenDefs width="0" height="0" aria-hidden>
    <defs>
      <linearGradient id="blue" x1="0" y1="0" x2="1" y2="1"><stop offset="0" stopColor="#b9c8ff" /><stop offset="1" stopColor="#4463e0" /></linearGradient>
      <linearGradient id="white" x1="0" y1="0" x2="1" y2="1"><stop offset="0" stopColor="#fff" /><stop offset="1" stopColor="#cfcfcf" /></linearGradient>
      <linearGradient id="fire" x1="1" y1="0" x2="0" y2="1"><stop offset=".2" stopColor="#ff3a10" /><stop offset=".6" stopColor="#ff9a1a" /><stop offset="1" stopColor="#ffe22e" /></linearGradient>
      <linearGradient id="cyl"><stop offset="0" stopColor="#9db0f5" /><stop offset=".35" stopColor="#8099f5" /><stop offset=".7" stopColor="#2441c4" /><stop offset="1" stopColor="#3552cf" /></linearGradient>
      <linearGradient id="hue"><stop offset="0" stopColor="#2c6" /><stop offset=".25" stopColor="#4cf" /><stop offset=".5" stopColor="#56f" /><stop offset=".75" stopColor="#f5c" /><stop offset="1" stopColor="#7c2" /></linearGradient>
      <radialGradient id="ball" cx=".35" cy=".3"><stop offset="0" stopColor="#fff" /><stop offset="1" stopColor="#a8a8a8" /></radialGradient>
      <radialGradient id="globe" cx=".35" cy=".3"><stop offset="0" stopColor="#cfe0ff" /><stop offset=".6" stopColor="#3158d8" /><stop offset="1" stopColor="#0c1e7c" /></radialGradient>
    </defs>
  </HiddenDefs>
);

const SceneDrawing = () => (
  <Scene role="img" aria-label="Parallel ビューポート">
    <g fill="none">
      <path d="M280 185 1024 307" stroke="#0f0" strokeWidth="3" />
      <path d="M613 240v403M1024 307v403" stroke="#f00" strokeWidth="3" />
      <path d="M54 878v41l43 7M54 919l13-18" stroke="#5f6163" strokeWidth="1.200" />
    </g>
    <g fontFamily="Liberation Sans" fontWeight="400" fontSize="21" fill="#5f6163"><text x="57" y="880">z</text><text x="73" y="900">y</text><text x="99" y="928">x</text></g>
    <g transform="translate(182 159) scale(.33333)" fill="none">
      <path d="M274 1269l59 9-22 30-63-10z" fill="#7d8287" />
      <circle cx="294" cy="78" r="12" fill="#fff" stroke="#f22" strokeWidth="4" />
      <path d="M293 82v1205" stroke="#ff0" strokeWidth="10" />
      <path d="M293 700v570" stroke="#22f" strokeWidth="6" strokeDasharray="7 11" />
      <path d="M293 656V480" stroke="#22f" strokeWidth="7" /><path d="M278 494l15-52 15 52z" fill="#22f" /><circle cx="293" cy="575" r="14" fill="#22f" />
      <path d="M302 672l66-76" stroke="#2f2" strokeWidth="6" /><path d="M388 575l-8 32-24-20z" fill="#2f2" /><circle cx="336" cy="634" r="14" fill="#2f2" />
      <path d="M321 687l170 26" stroke="#f22" strokeWidth="6" /><path d="M543 724l-56 7 4-30z" fill="#f22" /><circle cx="405" cy="702" r="14" fill="#f22" />
      <path d="M406 540l54 8M406 567l54 8M406 594l54 8" stroke="#e33" strokeWidth="3" /><path d="M406 540v54M433 543v56M460 548v55" stroke="#22f" strokeWidth="3" />
      <path d="M270 705 190 773" stroke="#fff" strokeWidth="3" strokeDasharray="8 12" /><circle cx="177" cy="788" r="15" stroke="#fff" strokeWidth="4" />
      <path d="M209 780c2 140 40 170 84 120" stroke="#f22" strokeWidth="5" />
      <path d="M68 650c8 130 110 235 225 250" stroke="#2f2" strokeWidth="5" />
      <path d="M68 648C28 700 60 760 208 780" stroke="#22f" strokeWidth="5" />
      <circle cx="294" cy="683" r="12" fill="#fff" stroke="#222" strokeWidth="4" />
      <rect x="283" y="1276" width="22" height="22" fill="#fff" stroke="#22f" strokeWidth="5" /><rect x="291" y="1284" width="6" height="6" fill="#22f" />
    </g>
  </Scene>
);

/* ---------- data ---------- */
const menus: [string, string, number][] = [
  ["ファイル", "F", 92], ["編集", "E", 77], ["ビュー", "V", 79], ["曲線", "C", 78], ["サーフェス", "S", 105], ["SubD", "U", 89],
  ["ソリッド", "O", 97], ["メッシュ", "M", 99], ["寸法", "D", 80], ["変形", "T", 78], ["ツール", "L", 79], ["解析", "A", 80],
  ["レンダリング", "R", 122], ["パネル", "P", 87], ["VisualARQ", "", 105], ["ヘルプ", "H", 80],
];
const tabsBefore: [string, number][] = [["標準", 72], ["作業平面", 104], ["ビューの設定", 143], ["表示", 72], ["選択", 56]];
const tabsAfter: [string, number][] = [
  ["表示/非表示", 138], ["変形", 72], ["曲線", 71], ["サーフェス", 113], ["ソリッド", 87], ["SubDツール", 130],
  ["メッシュツール", 147], ["レンダリングツール", 185], ["製図", 69], ["V7の新機能", 129],
];
const snaps: [string, boolean][] = [
  ["端点", true], ["近接点", false], ["点", true], ["中点", true], ["中心点", false], ["交点", true], ["垂直点", false],
  ["接点", false], ["四半円点", false], ["ノット", false], ["頂点", false],
];
const selects: [string, string | null, string][] = [
  ["レイヤ", "#f00", "Calumn"], ["表示色", "#fff", "レイヤの設定"], ["線種", null, "レイヤの設定"], ["印刷色", "#fff", "レイヤの設定"], ["印刷幅", null, "レイヤの設定"],
];

export default function App() {
  const [name, setName] = useState("C1");
  return (
    <>
      <Global />
      <Defs />
      <Page>
        <Window>
          <TitleBar>
            <svg width="24" height="24" viewBox="0 0 24 24" aria-hidden>
              <path d="M0 0h24v24H0z" />
              <path d="M7 1l2 5-1 5 4-4 2 1-2 4 4 3 6-3 1 2-5 6-3 3-4 1-3-3-6-2-1-7 3-5z" fill="#fff" />
              <path d="M7 14l6 3-4 3z" /><path d="M9 16l3 1-2 1z" fill="#fff" />
              <text x="16" y="8" fontSize="9" fill="#ddd" fontFamily="Liberation Sans">7</text>
            </svg>
            <Title>無題.3dm (25 KB) - Rhino 7 商用版 - [Parallel]</Title>
            <CaptionButton aria-label="最小化"><svg width="16" height="16"><path d="M0 8.500h16" stroke="#111" /></svg></CaptionButton>
            <CaptionButton aria-label="最大化"><svg width="16" height="16"><rect x="1" y="1" width="14" height="14" rx="1.500" fill="none" stroke="#111" strokeWidth="1.300" /></svg></CaptionButton>
            <CaptionButton aria-label="閉じる"><svg width="16" height="16"><path d="M1 1l14 14M15 1 1 15" stroke="#111" strokeWidth="1.300" /></svg></CaptionButton>
          </TitleBar>
          <MenuBar>
            {menus.map(([t, key, w]) => <MenuButton key={t} $w={w}>{t}{key && <>(<u>{key}</u>)</>}</MenuButton>)}
          </MenuBar>
          <Command>
            <GripV />
            <CommandBox>
              <HistoryRow>
                <History role="log">
                  <p>{"  "}Message: ファイルまたはアセンブリ 'SharpNeatLib-Octopus, Version=1.0.0.3, Culture=neutral, PublicKeyToken=null'、またはその依存関係の 1 つが読み込めませんでした。指定されたファイル</p>
                  <p />
                  <p>1個の開いた曲線を選択に追加しました。</p>
                </History>
                <ScrollTrack><ScrollThumb /></ScrollTrack>
              </HistoryRow>
              <Prompt>
                <label htmlFor="cmd">コマンド:</label><input id="cmd" type="text" />
                <Stepper><button aria-label="前へ"><Tri up /></button><button aria-label="次へ"><Tri /></button></Stepper>
              </Prompt>
            </CommandBox>
          </Command>
          <ToolGroup>
            <GripV />
            <ToolBody>
              <Tabs>
                {tabsBefore.map(([t, w]) => <Tab key={t} $w={w}>{t}</Tab>)}
                <Slant viewBox="0 0 22 27" aria-hidden><path d="M0 26.500 19 2q1-1.500 3-1.500" fill="none" stroke={c.line} /></Slant>
                <Tab $w={200} $on>ビューポートレイアウト</Tab>
                {tabsAfter.map(([t, w]) => <Tab key={t} $w={w}>{t}</Tab>)}
                <Tab $w={30} $fill>Vi</Tab>
                <More aria-label="その他のタブ"><svg width="12" height="10"><path d="M1 1l4 4-4 4M7 1l4 4-4 4" fill="none" stroke="#222" strokeWidth="1.300" /></svg></More>
                <Gear aria-label="設定"><Cog tone="#999" /></Gear>
              </Tabs>
              <IconRow>
                {topRow.map((group, i) => (
                  <React.Fragment key={i}>
                    {i > 0 && <Separator />}
                    {group.map(id => <ToolButton key={id} aria-label={id}><svg viewBox="0 0 40 40">{topIcons[id]}</svg></ToolButton>)}
                  </React.Fragment>
                ))}
              </IconRow>
            </ToolBody>
          </ToolGroup>
          <Workspace>
            <SideBar>
              <GripH />
              <SideGrid>
                {sideIcons.map(([label, corner, art]) => (
                  <button key={label} aria-label={label}>
                    <svg viewBox="0 0 114 114">{art}{corner && <path d="M110 85v25H84z" fill="#7c7c7c" stroke="#444" strokeWidth="2" />}</svg>
                  </button>
                ))}
              </SideGrid>
            </SideBar>
            <ViewColumn>
              <Viewport>
                <SceneDrawing />
                <ViewLabel>Parallel<svg width="18" height="18"><path d="M3 6h11l-5 6z" fill="#1f2536" /></svg></ViewLabel>
              </Viewport>
              <ViewTabs>
                <ViewTab $on>Parallel</ViewTab><ViewTab>Top</ViewTab><ViewTab>Front</ViewTab><ViewTab>Right</ViewTab>
                <ViewTab aria-label="追加"><svg width="14" height="14"><path d="M5 1h4v4h4v4H9v4H5V9H1V5h4z" fill="#fff" stroke="#888" /></svg></ViewTab>
              </ViewTabs>
            </ViewColumn>
            <Panel>
              <PanelTitle>プロパティ: オブジェクト<div><GripH /></div></PanelTitle>
              <PanelTabs>
                <PanelTab $on aria-label="プロパティ"><Wheel $size={21} /></PanelTab>
                {panelIcons.map(([t, icon]) => <PanelTab key={t} aria-label={t}>{icon}</PanelTab>)}
                <PanelTab $last aria-label="パネル設定"><Cog tone="#c3cadd" /></PanelTab>
              </PanelTabs>
              <PanelBody>
                <Modes>
                  <button aria-label="オブジェクト" aria-pressed="true"><Wheel $size={32} /></button>
                  <button aria-label="テクスチャ" aria-pressed="false">
                    <svg width="34" height="34"><path d="M15 2Q2 5 2 17q1 14 18 15 7 1 12-1l-1-11-9 1q-8 0-8-4 0-3 5-5z" fill="#c4c4c4" stroke="#555" strokeWidth="1.300" /><path d="M17 6Q8 9 8 16q2 10 23 9" fill="none" stroke="#111" strokeWidth="1.600" strokeDasharray="4 2.500" /></svg>
                  </button>
                  <button aria-label="属性" aria-pressed="false">
                    <svg width="36" height="36"><path d="M12 8v22q11 6 22 0V8z" fill="url(#cyl)" stroke="#334" /><ellipse cx="23" cy="8" rx="11" ry="4" fill="#c7d2ff" stroke="#334" /><path d="M2 2h18M2 5h18M2 8h18M2 11h18M2 14h18" stroke="#111" strokeWidth="1.200" strokeDasharray="2 1 20" /></svg>
                  </button>
                </Modes>
                <Heading>オブジェクト</Heading>
                <Row><RowLabel as="span">タイプ</RowLabel><Value>開いた曲線</Value></Row>
                <Row><RowLabel htmlFor="name">名前</RowLabel><Value $white><input id="name" type="text" value={name} onChange={e => setName(e.target.value)} /></Value></Row>
                {selects.map(([label, color, value]) => (
                  <Row key={label}>
                    <RowLabel htmlFor={label}>{label}</RowLabel>
                    <Value $white>
                      {color && <Swatch $color={color} />}
                      <select id={label} defaultValue={value}><option>{value}</option></select>
                      <SmallBox aria-hidden><Chevron /></SmallBox>
                    </Value>
                  </Row>
                ))}
                <Row><RowLabel as="span">ハイパーリンク</RowLabel><Value><DotsButton>...</DotsButton></Value></Row>
                <Heading>レンダリングメッシュ設定</Heading>
                <Row $dim><RowLabel htmlFor="custom">カスタムメッシュ</RowLabel><Value><Check id="custom" disabled /></Value></Row>
                <Row $dim><RowLabel as="span">設定</RowLabel><Value><DisabledButton disabled>調整...</DisabledButton></Value></Row>
                <Heading>レンダリング中</Heading>
                <Row><RowLabel htmlFor="cast">キャストシャドウ</RowLabel><Value><Check id="cast" defaultChecked /></Value></Row>
                <Row><RowLabel htmlFor="receive">レシーブシャドウ</RowLabel><Value><Check id="receive" defaultChecked /></Value></Row>
                <Heading>アイソカーブの密度</Heading>
                <Row $dim>
                  <RowLabel htmlFor="density">密度</RowLabel>
                  <Value $white><input id="density" type="text" disabled /><TinyStepper><button disabled aria-label="増やす"><Tri up tone="#666" /></button><button disabled aria-label="減らす"><Tri tone="#666" /></button></TinyStepper></Value>
                </Row>
                <Row $dim><RowLabel htmlFor="iso">サーフェスのアイソカーブ...</RowLabel><Value><Check id="iso" disabled /></Value></Row>
                <WideButton>マッチング(M)</WideButton>
                <WideButton>詳細(D)...</WideButton>
              </PanelBody>
              <Highlight />
              <Callout>符号を記入</Callout>
            </Panel>
          </Workspace>
          <SnapBar>
            <SnapGrip />
            <SnapList>
              {snaps.map(([t, on]) => <label key={t}><Check defaultChecked={on} />{t}</label>)}
              <label><Check $soft />投影</label>
              <label><Check $soft />無効</label>
            </SnapList>
          </SnapBar>
          <StatusBar>
            <Status $w={109}>作業平面</Status>
            <Status $w={121}>x 3773.515</Status>
            <Status $w={121}>y 6583.425</Status>
            <Status $w={121}>z 0.000</Status>
            <Status $w={121}>ミリメートル</Status>
            <Status $w={234} $left><StatusSwatch />Calumn</Status>
            <Status $w={172}>グリッドスナップ</Status>
            <Status $w={123}>直交モード</Status>
            <Status $w={123}>平面モード</Status>
            <Status $w={80} $on>Osnap</Status>
            <Status $w={166} $on>スマートトラック</Status>
            <Status $w={127} $on>ガムボール</Status>
            <Status $w={155}>ヒストリを記録</Status>
            <Status $w={92}>フィルタ</Status>
            <Status $w={8} $left>使</Status>
          </StatusBar>
        </Window>
      </Page>
    </>
  );
}
